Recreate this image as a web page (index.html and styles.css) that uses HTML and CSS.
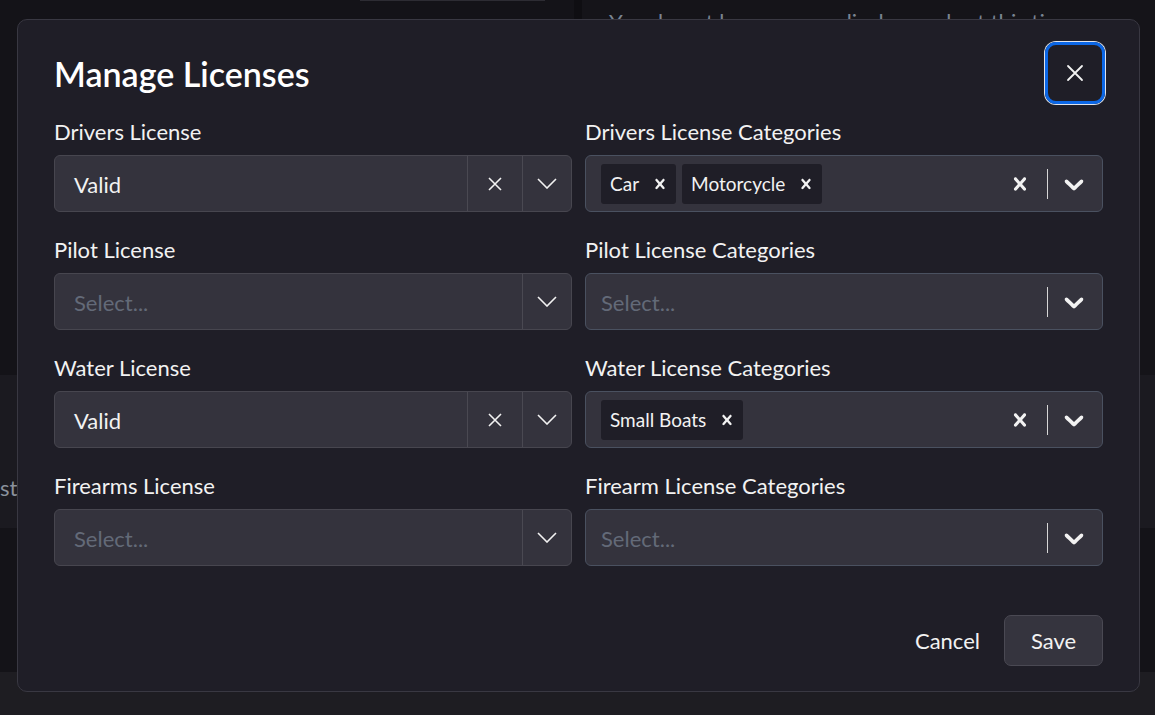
FILE: index.html
```html
<!DOCTYPE html>
<html lang="en">
<head>
<meta charset="utf-8">
<title>Manage Licenses</title>
<link rel="stylesheet" href="styles.css">
</head>
<body>
<div class="page">
  <div class="top-area">
    <div class="left-panel"><div class="search-edge"></div></div>
    <div class="panel-divider"></div>
    <div class="right-panel"><p class="empty">You do not have any medical records at this time.</p></div>
  </div>
  <div class="band"><span>st</span></div>
  <div class="mid"></div>
  <div class="bottom-bar"></div>
</div>

<div class="modal" role="dialog" aria-labelledby="mtitle">
  <div class="modal-header">
    <h2 class="modal-title" id="mtitle">Manage Licenses</h2>
    <button class="close-btn" aria-label="Close">
      <svg width="20" height="20" viewBox="0 0 20 20"><path d="M3 3 L17 17 M17 3 L3 17" stroke="#f2f2f2" stroke-width="1.8" fill="none" stroke-linecap="round"/></svg>
    </button>
  </div>

  <div class="fields">
    <div class="field">
      <label>Drivers License</label>
      <div class="select">
        <div class="value">Valid</div>
        <div class="ind ind-clear"><svg width="16" height="16" viewBox="0 0 16 16"><path d="M2 2 L14 14 M14 2 L2 14" stroke="#f2f2f2" stroke-width="1.6" fill="none"/></svg></div>
        <div class="ind ind-arrow"><svg width="20" height="11" viewBox="0 0 20 11"><path d="M1 1 L10 10 L19 1" stroke="#f2f2f2" stroke-width="1.6" fill="none"/></svg></div>
      </div>
    </div>
    <div class="field">
      <label>Drivers License Categories</label>
      <div class="select multi">
        <div class="chips">
          <div class="chip"><span class="chip-label">Car</span><span class="chip-remove"><svg width="20" height="20" viewBox="0 0 20 20"><path d="M14.348 14.849c-0.469 0.469-1.229 0.469-1.697 0l-2.651-3.030-2.651 3.029c-0.469 0.469-1.229 0.469-1.697 0-0.469-0.469-0.469-1.229 0-1.697l2.758-3.15-2.759-3.152c-0.469-0.469-0.469-1.228 0-1.697s1.228-0.469 1.697 0l2.652 3.031 2.651-3.031c0.469-0.469 1.228-0.469 1.697 0s0.469 1.229 0 1.697l-2.758 3.152 2.758 3.15c0.469 0.469 0.469 1.229 0 1.698z" fill="#f2f2f2"/></svg></span></div>
          <div class="chip"><span class="chip-label">Motorcycle</span><span class="chip-remove"><svg width="20" height="20" viewBox="0 0 20 20"><path d="M14.348 14.849c-0.469 0.469-1.229 0.469-1.697 0l-2.651-3.030-2.651 3.029c-0.469 0.469-1.229 0.469-1.697 0-0.469-0.469-0.469-1.229 0-1.697l2.758-3.15-2.759-3.152c-0.469-0.469-0.469-1.228 0-1.697s1.228-0.469 1.697 0l2.652 3.031 2.651-3.031c0.469-0.469 1.228-0.469 1.697 0s0.469 1.229 0 1.697l-2.758 3.152 2.758 3.15c0.469 0.469 0.469 1.229 0 1.698z" fill="#f2f2f2"/></svg></span></div>
        </div>
        <div class="mind"><svg width="26" height="26" viewBox="0 0 20 20"><path d="M14.348 14.849c-0.469 0.469-1.229 0.469-1.697 0l-2.651-3.030-2.651 3.029c-0.469 0.469-1.229 0.469-1.697 0-0.469-0.469-0.469-1.229 0-1.697l2.758-3.15-2.759-3.152c-0.469-0.469-0.469-1.228 0-1.697s1.228-0.469 1.697 0l2.652 3.031 2.651-3.031c0.469-0.469 1.228-0.469 1.697 0s0.469 1.229 0 1.697l-2.758 3.152 2.758 3.15c0.469 0.469 0.469 1.229 0 1.698z" fill="#f2f2f2"/></svg></div>
        <span class="msep"></span>
        <div class="mind mind-arrow"><svg width="32" height="32" viewBox="0 0 20 20"><path d="M4.516 7.548c0.436-0.446 1.043-0.481 1.576 0l3.908 3.747 3.908-3.747c0.533-0.481 1.141-0.446 1.574 0 0.436 0.445 0.408 1.197 0 1.615-0.406 0.418-4.695 4.502-4.695 4.502-0.217 0.223-0.502 0.335-0.787 0.335s-0.57-0.112-0.789-0.335c0 0-4.287-4.084-4.695-4.502s-0.436-1.170 0-1.615z" fill="#f2f2f2"/></svg></div>
      </div>
    </div>

    <div class="field">
      <label>Pilot License</label>
      <div class="select">
        <div class="value placeholder">Select...</div>
        <div class="ind ind-arrow"><svg width="20" height="11" viewBox="0 0 20 11"><path d="M1 1 L10 10 L19 1" stroke="#f2f2f2" stroke-width="1.6" fill="none"/></svg></div>
      </div>
    </div>
    <div class="field">
      <label>Pilot License Categories</label>
      <div class="select multi">
        <div class="chips"><span class="mplaceholder">Select...</span></div>
        <span class="msep"></span>
        <div class="mind mind-arrow"><svg width="32" height="32" viewBox="0 0 20 20"><path d="M4.516 7.548c0.436-0.446 1.043-0.481 1.576 0l3.908 3.747 3.908-3.747c0.533-0.481 1.141-0.446 1.574 0 0.436 0.445 0.408 1.197 0 1.615-0.406 0.418-4.695 4.502-4.695 4.502-0.217 0.223-0.502 0.335-0.787 0.335s-0.57-0.112-0.789-0.335c0 0-4.287-4.084-4.695-4.502s-0.436-1.170 0-1.615z" fill="#f2f2f2"/></svg></div>
      </div>
    </div>

    <div class="field">
      <label>Water License</label>
      <div class="select">
        <div class="value">Valid</div>
        <div class="ind ind-clear"><svg width="16" height="16" viewBox="0 0 16 16"><path d="M2 2 L14 14 M14 2 L2 14" stroke="#f2f2f2" stroke-width="1.6" fill="none"/></svg></div>
        <div class="ind ind-arrow"><svg width="20" height="11" viewBox="0 0 20 11"><path d="M1 1 L10 10 L19 1" stroke="#f2f2f2" stroke-width="1.6" fill="none"/></svg></div>
      </div>
    </div>
    <div class="field">
      <label>Water License Categories</label>
      <div class="select multi">
        <div class="chips">
          <div class="chip"><span class="chip-label">Small Boats</span><span class="chip-remove"><svg width="20" height="20" viewBox="0 0 20 20"><path d="M14.348 14.849c-0.469 0.469-1.229 0.469-1.697 0l-2.651-3.030-2.651 3.029c-0.469 0.469-1.229 0.469-1.697 0-0.469-0.469-0.469-1.229 0-1.697l2.758-3.15-2.759-3.152c-0.469-0.469-0.469-1.228 0-1.697s1.228-0.469 1.697 0l2.652 3.031 2.651-3.031c0.469-0.469 1.228-0.469 1.697 0s0.469 1.229 0 1.697l-2.758 3.152 2.758 3.150c0.469 0.469 0.469 1.229 0 1.698z" fill="#f2f2f2"/></svg></span></div>
        </div>
        <div class="mind"><svg width="26" height="26" viewBox="0 0 20 20"><path d="M14.348 14.849c-0.469 0.469-1.229 0.469-1.697 0l-2.651-3.030-2.651 3.029c-0.469 0.469-1.229 0.469-1.697 0-0.469-0.469-0.469-1.229 0-1.697l2.758-3.15-2.759-3.152c-0.469-0.469-0.469-1.228 0-1.697s1.228-0.469 1.697 0l2.652 3.031 2.651-3.031c0.469-0.469 1.228-0.469 1.697 0s0.469 1.229 0 1.697l-2.758 3.152 2.758 3.15c0.469 0.469 0.469 1.229 0 1.698z" fill="#f2f2f2"/></svg></div>
        <span class="msep"></span>
        <div class="mind mind-arrow"><svg width="32" height="32" viewBox="0 0 20 20"><path d="M4.516 7.548c0.436-0.446 1.043-0.481 1.576 0l3.908 3.747 3.908-3.747c0.533-0.481 1.141-0.446 1.574 0 0.436 0.445 0.408 1.197 0 1.615-0.406 0.418-4.695 4.502-4.695 4.502-0.217 0.223-0.502 0.335-0.787 0.335s-0.57-0.112-0.789-0.335c0 0-4.287-4.084-4.695-4.502s-0.436-1.170 0-1.615z" fill="#f2f2f2"/></svg></div>
      </div>
    </div>

    <div class="field">
      <label>Firearms License</label>
      <div class="select">
        <div class="value placeholder">Select...</div>
        <div class="ind ind-arrow"><svg width="20" height="11" viewBox="0 0 20 11"><path d="M1 1 L10 10 L19 1" stroke="#f2f2f2" stroke-width="1.6" fill="none"/></svg></div>
      </div>
    </div>
    <div class="field">
      <label>Firearm License Categories</label>
      <div class="select multi">
        <div class="chips"><span class="mplaceholder">Select...</span></div>
        <span class="msep"></span>
        <div class="mind mind-arrow"><svg width="32" height="32" viewBox="0 0 20 20"><path d="M4.516 7.548c0.436-0.446 1.043-0.481 1.576 0l3.908 3.747 3.908-3.747c0.533-0.481 1.141-0.446 1.574 0 0.436 0.445 0.408 1.197 0 1.615-0.406 0.418-4.695 4.502-4.695 4.502-0.217 0.223-0.502 0.335-0.787 0.335s-0.57-0.112-0.789-0.335c0 0-4.287-4.084-4.695-4.502s-0.436-1.170 0-1.615z" fill="#f2f2f2"/></svg></div>
      </div>
    </div>
  </div>

  <div class="modal-footer">
    <button class="btn-cancel">Cancel</button>
    <button class="btn-save">Save</button>
  </div>
</div>
</body>
</html>
```

FILE: styles.css
```css
* { box-sizing: border-box; }

body {
  margin: 0;
  background: #141318;
  font-family: Lato, "Noto Sans", sans-serif;
  color: #f2f2f2;
}

/* backdrop page */
.page {
  height: 715px;
  display: flex;
  flex-direction: column;
  overflow: hidden;
}
.top-area {
  height: 375px;
  display: grid;
  grid-template-columns: 574px 8px 1fr;
}
.left-panel { background: #141318; }
.search-edge {
  margin-left: 360px;
  width: 185px;
  height: 1px;
  background: #2d2c33;
}
.panel-divider { background: #0f0e12; }
.right-panel {
  background: #151419;
  padding: 8px 0 0 27px;
}
.empty {
  margin: 0;
  font-size: 22px;
  color: #7a8492;
}
.band {
  height: 153px;
  background: #1b1a20;
  padding-top: 99px;
  font-size: 22px;
  color: #8a919c;
}
.mid { height: 144px; background: #141318; }
.bottom-bar { flex: 1; background: #1e1d22; }

/* modal */
.modal {
  position: fixed;
  left: 17px;
  top: 19px;
  width: 1123px;
  height: 673px;
  border: 1px solid #393842;
  border-radius: 10px;
  background: #1f1e27;
  padding: 22px 36px 25px 36px;
  display: flex;
  flex-direction: column;
}
.modal-header {
  display: flex;
  justify-content: space-between;
  align-items: center;
  height: 62px;
}
.modal-title {
  margin: 0;
  font-size: 34px;
  font-weight: 600;
  color: #ffffff;
}
.close-btn {
  width: 60px;
  height: 62px;
  margin-right: -2px;
  border: 3px solid #0b67e6;
  border-radius: 11px;
  box-shadow: 0 0 0 1px #dfe3ea;
  background: transparent;
  display: flex;
  align-items: center;
  justify-content: center;
  padding: 0;
}

.fields {
  margin-top: 15px;
  display: grid;
  grid-template-columns: 1fr 1fr;
  column-gap: 13px;
  row-gap: 25px;
}
.field label {
  display: block;
  font-size: 22px;
  line-height: 26px;
  margin-bottom: 10px;
  color: #f2f2f2;
}
.select {
  height: 57px;
  border: 1px solid #47464f;
  border-radius: 6px;
  background: #34333d;
  display: flex;
  align-items: stretch;
}
.value {
  flex: 1;
  display: flex;
  align-items: center;
  padding: 2px 0 0 19px;
  font-size: 22px;
  color: #f2f2f2;
}
.placeholder { color: #636a78; }
.ind {
  border-left: 1px solid #4a4952;
  display: flex;
  align-items: center;
  justify-content: center;
}
.ind-clear { width: 55px; }
.ind-arrow { width: 49px; }

.multi {
  border-color: #4a5160;
  align-items: center;
  padding-left: 15px;
  padding-right: 8px;
}
.chips {
  flex: 1;
  display: flex;
  align-items: center;
  gap: 6px;
}
.chip {
  height: 40px;
  display: flex;
  align-items: center;
  background: #1f1e27;
  border-radius: 3px;
  font-size: 19px;
}
.chip-label { padding: 0 4px 0 9px; }
.chip-remove {
  width: 33px;
  display: flex;
  justify-content: center;
  align-items: center;
}
.mplaceholder {
  padding-top: 2px;
  font-size: 22px;
  color: #636a78;
}
.mind {
  width: 40px;
  display: flex;
  align-items: center;
  justify-content: center;
}
.msep {
  width: 1px;
  height: 30px;
  background: #d6d6d6;
  margin: 0 6px 0 7px;
}

.modal-footer {
  margin-top: auto;
  display: flex;
  justify-content: flex-end;
  align-items: center;
  gap: 24px;
}
.btn-cancel {
  background: none;
  border: none;
  padding: 0;
  font-family: inherit;
  font-size: 22px;
  color: #f2f2f2;
}
.btn-save {
  width: 99px;
  height: 51px;
  border: 1px solid #4a4953;
  border-radius: 7px;
  background: #35343e;
  font-family: inherit;
  font-size: 22px;
  color: #f2f2f2;
}
```
